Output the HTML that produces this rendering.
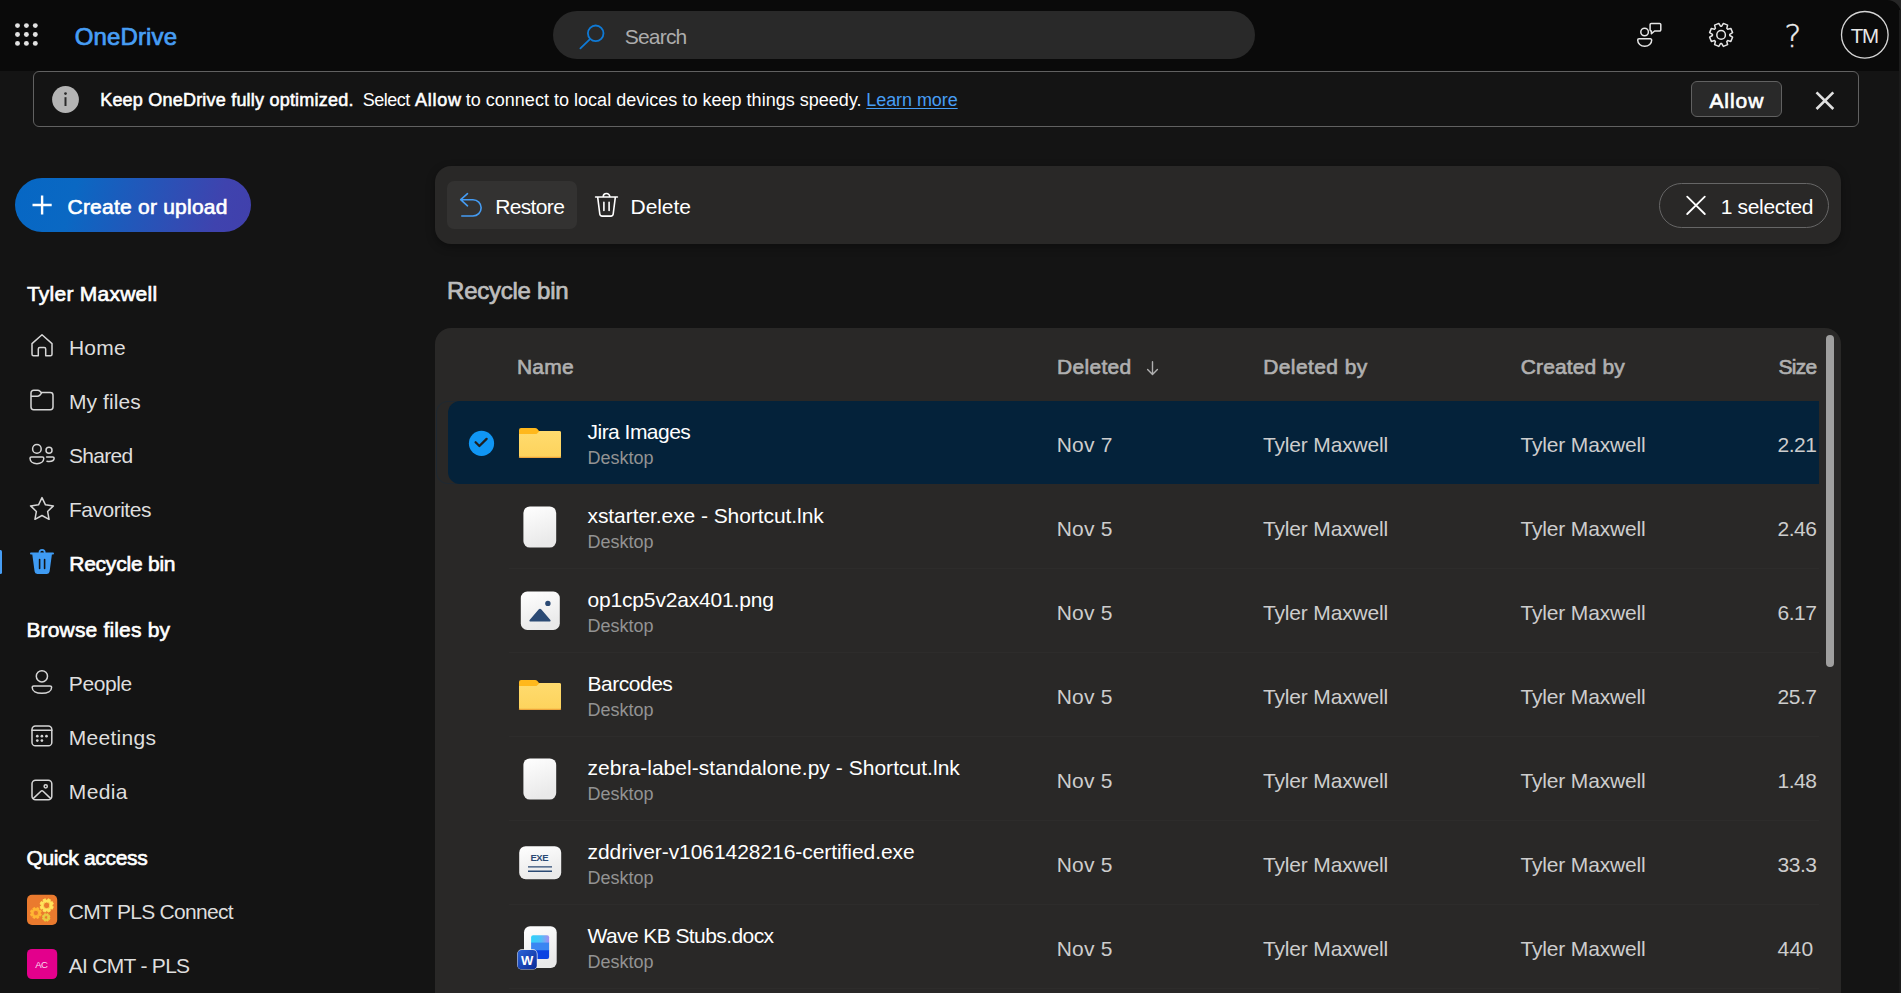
<!DOCTYPE html>
<html lang="en">
<head>
<meta charset="utf-8">
<title>Recycle bin - OneDrive</title>
<style>
*{box-sizing:border-box;margin:0;padding:0}
html,body{width:1901px;height:993px;overflow:hidden;background:#141414}
body{position:relative;font-family:"Liberation Sans",sans-serif;color:#fff;-webkit-font-smoothing:antialiased}
.abs{position:absolute}
.t{position:absolute;white-space:nowrap;line-height:1}
.b{font-weight:bold}
#hdr{left:0;top:0;width:1901px;height:71px;background:#0a0a0a}
#search{left:553px;top:11px;width:702px;height:48px;border-radius:24px;background:#292929}
#banner{left:33px;top:71px;width:1826px;height:56px;border:1px solid #616161;border-radius:6px;background:#141414}
#allow{left:1691px;top:81px;width:91px;height:36px;border:1px solid #616161;border-radius:6px;background:#292929}
#create{left:15px;top:178px;width:236px;height:54px;border-radius:27px;background:linear-gradient(105deg,#0667c4 0%,#0a68c3 25%,#3f43ae 85%,#4140ac 100%)}
#cmd{left:435px;top:166px;width:1406px;height:78px;border-radius:16px;background:#292827;box-shadow:0 3px 8px rgba(0,0,0,.35)}
#restore{left:447px;top:181px;width:130px;height:48px;border-radius:7px;background:#333231}
#pill{left:1659px;top:183px;width:170px;height:45px;border:1px solid #666;border-radius:23px}
#list{left:435px;top:328px;width:1406px;height:700px;border-radius:16px;background:#292827}
#sel{left:448px;top:401px;width:1371px;height:83px;border-radius:12px 0 0 12px;background:#04223a}
.div{position:absolute;left:509px;width:1310px;height:1px;background:#2d2c2b}
#scroll{left:1826px;top:335px;width:8px;height:332px;border-radius:4px;background:#9f9f9f}
.nav{color:#dedede;font-size:21px}
.h{font-weight:bold;font-size:20px;color:#fff}
.n{font-size:21px;color:#fff}
.s{font-size:18px;color:#9a9a9a}
.c{font-size:21px;color:#d0d0d0}
.ch{font-size:20px;font-weight:bold;color:#b3b3b3}
svg{position:absolute;overflow:visible}
</style>
</head>
<body>
<!-- header -->
<div id="hdr" class="abs"></div>
<div id="search" class="abs"></div>
<div id="banner" class="abs"></div>
<div id="allow" class="abs"></div>
<div id="create" class="abs"></div>
<div id="cmd" class="abs"></div>
<div id="restore" class="abs"></div>
<div id="pill" class="abs"></div>
<div id="list" class="abs"></div>
<div class="abs" style="left:436px;top:401px;width:26px;height:83px;border:1px solid rgba(10,45,75,.3);border-right:none;border-radius:12px 0 0 12px"></div>
<div id="sel" class="abs"></div>
<div id="scroll" class="abs"></div>
<div class="div" style="top:568px"></div><div class="div" style="top:652px"></div><div class="div" style="top:736px"></div><div class="div" style="top:820px"></div><div class="div" style="top:904px"></div><div class="div" style="top:988px"></div>
<svg width="1901" height="993" viewBox="0 0 1901 993" style="left:0;top:0" fill="none" stroke-linecap="round" stroke-linejoin="round">
<path d="M1887 0 H1901 V14 A14 14 0 0 0 1887 0 Z" fill="#262626"/>
<rect x="1899" y="10" width="2" height="983" fill="#1b1b1b"/>
<circle cx="17.5" cy="25.6" r="2.45" fill="#e2e2e2"/>
<circle cx="17.5" cy="34.5" r="2.45" fill="#e2e2e2"/>
<circle cx="17.5" cy="43.4" r="2.45" fill="#e2e2e2"/>
<circle cx="26.4" cy="25.6" r="2.45" fill="#e2e2e2"/>
<circle cx="26.4" cy="34.5" r="2.45" fill="#e2e2e2"/>
<circle cx="26.4" cy="43.4" r="2.45" fill="#e2e2e2"/>
<circle cx="35.3" cy="25.6" r="2.45" fill="#e2e2e2"/>
<circle cx="35.3" cy="34.5" r="2.45" fill="#e2e2e2"/>
<circle cx="35.3" cy="43.4" r="2.45" fill="#e2e2e2"/>
<g stroke="#0f7ad6" stroke-width="1.8"><circle cx="595.7" cy="33.3" r="7.8"/><path d="M590 39.2 L580.4 48.3"/></g>
<g stroke="#e6e6e6" stroke-width="1.5"><circle cx="1644.6" cy="32" r="3.8"/><path d="M1639 38.8 H1650.4 a1.3 1.3 0 0 1 1.3 1.3 c0 3.6 -3 6.2 -7 6.2 s-7 -2.6 -7 -6.2 a1.3 1.3 0 0 1 1.3 -1.3 Z"/><path d="M1651.3 23.4 H1659.6 a1.2 1.2 0 0 1 1.2 1.2 V29.8 a1.2 1.2 0 0 1 -1.2 1.2 H1654.6 L1651.4 33.8 V31 a1.2 1.2 0 0 1 -1.3 -1.2 V24.6 a1.2 1.2 0 0 1 1.2 -1.2 Z"/></g>
<g stroke="#e6e6e6" stroke-width="1.5"><path d="M1721.71 26.22 L1723.38 23.42 L1727.60 25.17 L1726.80 28.33 L1727.67 29.20 L1730.83 28.40 L1732.58 32.62 L1729.78 34.29 L1729.78 35.51 L1732.58 37.18 L1730.83 41.40 L1727.67 40.60 L1726.80 41.47 L1727.60 44.63 L1723.38 46.38 L1721.71 43.58 L1720.49 43.58 L1718.82 46.38 L1714.60 44.63 L1715.40 41.47 L1714.53 40.60 L1711.37 41.40 L1709.62 37.18 L1712.42 35.51 L1712.42 34.29 L1709.62 32.62 L1711.37 28.40 L1714.53 29.20 L1715.40 28.33 L1714.60 25.17 L1718.82 23.42 L1720.49 26.22 Z"/><circle cx="1721.1" cy="34.9" r="4.3"/></g>
<circle cx="1864.8" cy="34.8" r="23.3" stroke="#d6d6d6" stroke-width="1.3"/>
<circle cx="65.5" cy="99.5" r="13.4" fill="#b4b4b4"/><rect x="64.5" y="97.2" width="2" height="8.8" fill="#2a2a2a"/><circle cx="65.5" cy="93.6" r="1.35" fill="#2a2a2a"/>
<path d="M1816.5 92.3 L1833.3 109 M1833.3 92.3 L1816.5 109" stroke="#e0e0e0" stroke-width="2.6" stroke-linecap="butt"/>
<path d="M32.5 205 H51.7 M42.1 195.4 V214.6" stroke="#fff" stroke-width="2.4" stroke-linecap="butt"/>
<path d="M467.5 193.7 L460.7 199.7 L467.5 205.8 M461.2 199.7 H473 a8.15 8.15 0 0 1 0 16.3 H461.8" stroke="#459cf3" stroke-width="1.6"/>
<g stroke="#fff" stroke-width="1.6"><path d="M595.6 197 H617.4 M603.2 196.8 a3.3 3.3 0 0 1 6.6 0 M597.7 197.3 L599.8 214 a2.4 2.4 0 0 0 2.4 2.1 H610.8 a2.4 2.4 0 0 0 2.4 -2.1 L615.3 197.3 M603.9 202.3 V210.4 M609.1 202.3 V210.4"/></g>
<path d="M1687.2 196.6 L1704.8 214 M1704.8 196.6 L1687.2 214" stroke="#fff" stroke-width="1.8"/>
<path d="M1152.5 361.8 V374 M1147.6 369.5 L1152.5 374.4 L1157.4 369.5" stroke="#b0b0b0" stroke-width="1.4"/>
<path d="M0 550 H0.5 a1.5 1.5 0 0 1 1.5 1.5 V572.5 a1.5 1.5 0 0 1 -1.5 1.5 H0 Z" fill="#479ef5"/>
<g stroke="#d6d6d6" stroke-width="1.5">
<path d="M42 334.8 L52 343.6 V354.2 a1.5 1.5 0 0 1 -1.5 1.5 H45.7 V349 a1.5 1.5 0 0 0 -1.5 -1.5 H39.8 a1.5 1.5 0 0 0 -1.5 1.5 V355.7 H33.5 a1.5 1.5 0 0 1 -1.5 -1.5 V343.6 Z"/>
<path d="M31 393 a2.7 2.7 0 0 1 2.7 -2.7 H37.6 c1 0 1.7 .3 2.4 1 l1.3 1.3 H50.3 a2.7 2.7 0 0 1 2.7 2.7 V407 a2.7 2.7 0 0 1 -2.7 2.7 H33.7 a2.7 2.7 0 0 1 -2.7 -2.7 Z M31 396.3 H37.4 c.9 0 1.6 -.3 2.2 -.9 L41.6 393"/>
<circle cx="36.9" cy="448.9" r="4.3"/><path d="M31.4 456.9 H42.4 a1.4 1.4 0 0 1 1.4 1.4 c0 3.2 -3 5.4 -6.9 5.4 s-6.9 -2.2 -6.9 -5.4 a1.4 1.4 0 0 1 1.4 -1.4 Z"/>
<circle cx="49" cy="450.3" r="3"/><path d="M46.6 457 H52.8 a1.3 1.3 0 0 1 1.3 1.3 c0 2 -2 3.2 -5 3.2 c-.8 0 -1.5 -.1 -2.1 -.2"/>
<path d="M42.00 497.60 L45.47 504.83 L53.41 505.89 L47.61 511.42 L49.05 519.31 L42.00 515.50 L34.95 519.31 L36.39 511.42 L30.59 505.89 L38.53 504.83 Z"/>
<circle cx="41.9" cy="676.3" r="5.6"/><path d="M33.8 685.9 H50 a1.6 1.6 0 0 1 1.6 1.6 c0 3.6 -4 5.8 -9.7 5.8 s-9.7 -2.2 -9.7 -5.8 a1.6 1.6 0 0 1 1.6 -1.6 Z"/>
<rect x="32" y="726" width="19.8" height="19.8" rx="3.4"/><path d="M32 730.2 H51.8"/>
<rect x="32" y="780.2" width="19.8" height="19.6" rx="3.6"/><circle cx="45.7" cy="786.3" r="1.6"/><path d="M33.4 798.4 L40.9 791.2 a1.6 1.6 0 0 1 2.2 0 L50.5 798.4"/>
</g>
<circle cx="37.3" cy="736.2" r="1.35" fill="#d6d6d6"/>
<circle cx="41.9" cy="736.2" r="1.35" fill="#d6d6d6"/>
<circle cx="46.5" cy="736.2" r="1.35" fill="#d6d6d6"/>
<circle cx="37.3" cy="740.6" r="1.35" fill="#d6d6d6"/>
<circle cx="41.9" cy="740.6" r="1.35" fill="#d6d6d6"/>
<path d="M38.6 552.6 a3.5 3.5 0 0 1 7 0 H53 a1 1 0 0 1 0 2 H51.9 L49.6 571.6 a2.7 2.7 0 0 1 -2.7 2.4 H37.3 a2.7 2.7 0 0 1 -2.7 -2.4 L32.3 554.6 H31 a1 1 0 0 1 0 -2 Z M40.3 552.6 H43.9 a1.8 1.8 0 0 0 -3.6 0 Z" fill="#3f9bf3" fill-rule="evenodd"/>
<path d="M39.6 559.6 V568.4 M44.6 559.6 V568.4" stroke="#141414" stroke-width="1.6"/>
<rect x="27" y="894.8" width="30.2" height="30.2" rx="5" fill="#ea7a2e"/>
<path d="M47.33 900.04 L48.03 898.73 L50.48 899.75 L50.04 901.16 L50.94 902.06 L52.35 901.62 L53.37 904.07 L52.06 904.77 L52.06 906.03 L53.37 906.73 L52.35 909.18 L50.94 908.74 L50.04 909.64 L50.48 911.05 L48.03 912.07 L47.33 910.76 L46.07 910.76 L45.37 912.07 L42.92 911.05 L43.36 909.64 L42.46 908.74 L41.05 909.18 L40.03 906.73 L41.34 906.03 L41.34 904.77 L40.03 904.07 L41.05 901.62 L42.46 902.06 L43.36 901.16 L42.92 899.75 L45.37 898.73 L46.07 900.04 Z M50.0 905.4 a3.3 3.3 0 1 0 -6.6 0 a3.3 3.3 0 1 0 6.6 0 Z" fill="#ffe45c" fill-rule="evenodd" stroke="#ffe45c" stroke-width="0.8"/>
<path d="M36.43 908.53 L36.99 907.51 L39.01 908.34 L38.69 909.47 L39.43 910.21 L40.56 909.89 L41.39 911.91 L40.37 912.47 L40.37 913.53 L41.39 914.09 L40.56 916.11 L39.43 915.79 L38.69 916.53 L39.01 917.66 L36.99 918.49 L36.43 917.47 L35.37 917.47 L34.81 918.49 L32.79 917.66 L33.11 916.53 L32.37 915.79 L31.24 916.11 L30.41 914.09 L31.43 913.53 L31.43 912.47 L30.41 911.91 L31.24 909.89 L32.37 910.21 L33.11 909.47 L32.79 908.34 L34.81 907.51 L35.37 908.53 Z M38.6 913 a2.7 2.7 0 1 0 -5.4 0 a2.7 2.7 0 1 0 5.4 0 Z" fill="#ffb733" fill-rule="evenodd" stroke="#ffb733" stroke-width="0.8"/>
<path d="M46.56 914.32 L46.96 913.57 L48.37 914.16 L48.12 914.97 L48.63 915.48 L49.44 915.23 L50.03 916.64 L49.28 917.04 L49.28 917.76 L50.03 918.16 L49.44 919.57 L48.63 919.32 L48.12 919.83 L48.37 920.64 L46.96 921.23 L46.56 920.48 L45.84 920.48 L45.44 921.23 L44.03 920.64 L44.28 919.83 L43.77 919.32 L42.96 919.57 L42.37 918.16 L43.12 917.76 L43.12 917.04 L42.37 916.64 L42.96 915.23 L43.77 915.48 L44.28 914.97 L44.03 914.16 L45.44 913.57 L45.84 914.32 Z M48.0 917.4 a1.8 1.8 0 1 0 -3.6 0 a1.8 1.8 0 1 0 3.6 0 Z" fill="#e9cf42" fill-rule="evenodd" stroke="#e9cf42" stroke-width="0.8"/>
<rect x="27" y="948.9" width="30.2" height="30.2" rx="5" fill="#e3008c"/>
<circle cx="481.5" cy="443.4" r="12.6" fill="#1096f4"/><path d="M475.6 442.3 L479.4 446 L486.6 438.9" stroke="#1f1f1f" stroke-width="2.3"/>
<defs><linearGradient id="fg" x1="0" y1="0" x2="0" y2="1"><stop offset="0" stop-color="#ffdb6e"/><stop offset="1" stop-color="#fdd35c"/></linearGradient><linearGradient id="pg" x1="0" y1="0" x2="0.3" y2="1"><stop offset="0" stop-color="#ffffff"/><stop offset="1" stop-color="#e9e9e9"/></linearGradient><linearGradient id="wg" x1="0" y1="0" x2="1" y2="1"><stop offset="0" stop-color="#2a63d8"/><stop offset="1" stop-color="#0a2a96"/></linearGradient><linearGradient id="d1" x1="0" y1="0" x2="1" y2="0"><stop offset="0" stop-color="#2fd2fa"/><stop offset="0.55" stop-color="#4fc0f8"/><stop offset="1" stop-color="#a58df0"/></linearGradient></defs>
<path d="M519 429.9 a2 2 0 0 1 2 -2 H535 c1 0 1.8 .4 2.4 1.1 L539 431.0 H559 a2 2 0 0 1 2 2 V437.9 H519 Z" fill="#ffb81c"/><path d="M519 434.09999999999997 H535.2 c.9 0 1.6 -.3 2.2 -.9 L539.6 431.0 H559.4 a1.6 1.6 0 0 1 1.6 1.6 V456.29999999999995 a1.6 1.6 0 0 1 -1.6 1.6 H520.6 a1.6 1.6 0 0 1 -1.6 -1.6 Z" fill="url(#fg)"/><path d="M519.3 457.29999999999995 H560.7" stroke="#ea9a34" stroke-width="1"/>
<path d="M519 681.9 a2 2 0 0 1 2 -2 H535 c1 0 1.8 .4 2.4 1.1 L539 683.0 H559 a2 2 0 0 1 2 2 V689.9 H519 Z" fill="#ffb81c"/><path d="M519 686.1 H535.2 c.9 0 1.6 -.3 2.2 -.9 L539.6 683.0 H559.4 a1.6 1.6 0 0 1 1.6 1.6 V708.3 a1.6 1.6 0 0 1 -1.6 1.6 H520.6 a1.6 1.6 0 0 1 -1.6 -1.6 Z" fill="url(#fg)"/><path d="M519.3 709.3 H560.7" stroke="#ea9a34" stroke-width="1"/>
<rect x="523.4" y="506.4" width="32.8" height="41.2" rx="6.5" fill="url(#pg)"/>
<rect x="523.4" y="758.4" width="32.8" height="41.2" rx="6.5" fill="url(#pg)"/>
<rect x="520.8" y="591.6" width="39" height="38.4" rx="6.5" fill="url(#pg)"/>
<path d="M529.6 620 L538.6 609.6 a1.8 1.8 0 0 1 2.8 0 L550.4 620 a1 1 0 0 1 -.8 1.6 H530.4 a1 1 0 0 1 -.8 -1.6 Z" fill="#2b4a74"/><circle cx="547.9" cy="603.4" r="2.7" fill="#2b4a74"/>
<rect x="519.2" y="846.2" width="42" height="33" rx="6.5" fill="url(#pg)"/>
<path d="M528 866.9 H552 M528 871.2 H552" stroke="#2b4a74" stroke-width="1.4" stroke-linecap="butt"/>
<rect x="524" y="926.3" width="32.7" height="41.6" rx="6" fill="url(#pg)"/>
<rect x="531.1" y="935.2" width="18" height="9" rx="2" fill="url(#d1)"/><rect x="531.1" y="942.6" width="18" height="8.4" fill="#3b86f2"/><path d="M531.1 950.2 H549.1 V957 a2 2 0 0 1 -2 2 H533.1 a2 2 0 0 1 -2 -2 Z" fill="#0a43e2"/>
<rect x="517.2" y="949.3" width="20.3" height="20.3" rx="4.6" fill="#f2f2f2"/><rect x="517.6" y="950" width="19.2" height="19.2" rx="4" fill="url(#wg)"/>
</svg>
<span class="t" style="left:74.7px;top:24.9px;font-size:24px;color:#479ef5;letter-spacing:0.14px;-webkit-text-stroke:0.74px #479ef5;">OneDrive</span>
<span class="t" style="left:624.8px;top:25.6px;font-size:21px;color:#adadad;letter-spacing:-0.81px;">Search</span>
<span class="t" style="left:1850.8px;top:25.6px;font-size:20.5px;color:#e8e8e8;letter-spacing:-1.27px;">TM</span>
<span class="t" style="left:100.2px;top:91.3px;font-size:18px;color:#ffffff;letter-spacing:0.21px;-webkit-text-stroke:0.56px #ffffff;">Keep OneDrive fully optimized.</span>
<span class="t" style="left:362.7px;top:91.3px;font-size:18px;color:#ffffff;letter-spacing:-0.48px;">Select</span>
<span class="t" style="left:415.1px;top:91.3px;font-size:18px;color:#ffffff;letter-spacing:0.72px;-webkit-text-stroke:0.56px #ffffff;">Allow</span>
<span class="t" style="left:465.7px;top:91.3px;font-size:18px;color:#ffffff;letter-spacing:0.02px;">to connect to local devices to keep things speedy.</span>
<span class="t" style="left:866.3px;top:91.3px;font-size:18px;color:#479ef5;letter-spacing:-0.07px;text-decoration:underline;text-underline-offset:2px">Learn more</span>
<span class="t" style="left:1709.4px;top:90.2px;font-size:21px;color:#ffffff;letter-spacing:0.94px;-webkit-text-stroke:0.65px #ffffff;">Allow</span>
<span class="t" style="left:67.5px;top:196.2px;font-size:21px;color:#ffffff;letter-spacing:0.23px;-webkit-text-stroke:0.65px #ffffff;">Create or upload</span>
<span class="t" style="left:495.2px;top:196.2px;font-size:21px;color:#ffffff;letter-spacing:-0.64px;">Restore</span>
<span class="t" style="left:630.6px;top:196.2px;font-size:21px;color:#ffffff;letter-spacing:-0.08px;">Delete</span>
<span class="t" style="left:1720.7px;top:195.9px;font-size:21px;color:#ffffff;letter-spacing:-0.33px;">1 selected</span>
<span class="t" style="left:447.1px;top:278.7px;font-size:24px;color:#bdbdbd;letter-spacing:-0.26px;-webkit-text-stroke:0.74px #bdbdbd;">Recycle bin</span>
<span class="t" style="left:26.9px;top:283.2px;font-size:21px;color:#ffffff;letter-spacing:0.25px;-webkit-text-stroke:0.65px #ffffff;">Tyler Maxwell</span>
<span class="t" style="left:68.9px;top:337.2px;font-size:21px;color:#dedede;letter-spacing:0.25px;">Home</span>
<span class="t" style="left:68.9px;top:391.2px;font-size:21px;color:#dedede;letter-spacing:0.11px;">My files</span>
<span class="t" style="left:68.9px;top:445.2px;font-size:21px;color:#dedede;letter-spacing:-0.69px;">Shared</span>
<span class="t" style="left:68.9px;top:499.2px;font-size:21px;color:#dedede;letter-spacing:-0.48px;">Favorites</span>
<span class="t" style="left:69.2px;top:553.2px;font-size:21px;color:#ffffff;letter-spacing:-0.22px;-webkit-text-stroke:0.65px #ffffff;">Recycle bin</span>
<span class="t" style="left:26.4px;top:618.6px;font-size:21px;color:#ffffff;letter-spacing:0.17px;-webkit-text-stroke:0.65px #ffffff;">Browse files by</span>
<span class="t" style="left:68.8px;top:673.2px;font-size:21px;color:#dedede;letter-spacing:-0.38px;">People</span>
<span class="t" style="left:68.8px;top:727.0px;font-size:21px;color:#dedede;letter-spacing:0.27px;">Meetings</span>
<span class="t" style="left:68.8px;top:780.9px;font-size:21px;color:#dedede;letter-spacing:0.37px;">Media</span>
<span class="t" style="left:26.4px;top:846.5px;font-size:21px;color:#ffffff;letter-spacing:-0.32px;-webkit-text-stroke:0.65px #ffffff;">Quick access</span>
<span class="t" style="left:68.8px;top:900.8px;font-size:21px;color:#dedede;letter-spacing:-0.71px;">CMT PLS Connect</span>
<span class="t" style="left:68.8px;top:955.0px;font-size:21px;color:#dedede;letter-spacing:-0.71px;">AI CMT - PLS</span>
<span class="t" style="left:35.2px;top:960.3px;font-size:9.6px;color:#fbdcef;letter-spacing:-0.56px;">AC</span>
<span class="t" style="left:1784.3px;top:19.7px;font-size:32.5px;color:#ececec;letter-spacing:-0.25px;font-family:DejaVu Sans Light,DejaVu Sans,sans-serif;font-weight:200;-webkit-text-stroke:0.35px #ececec;">?</span>
<span class="t" style="left:530.4px;top:853.1px;font-size:9.5px;color:#2b4a74;letter-spacing:-0.43px;font-weight:bold;">EXE</span>
<span class="t" style="left:521.0px;top:953.6px;font-size:13px;color:#ffffff;letter-spacing:0.56px;font-weight:bold;">W</span>
<span class="t" style="left:516.9px;top:356.0px;font-size:21px;color:#b0b0b0;letter-spacing:0.27px;-webkit-text-stroke:0.65px #b0b0b0;">Name</span>
<span class="t" style="left:1057.0px;top:356.0px;font-size:21px;color:#b0b0b0;letter-spacing:0.32px;-webkit-text-stroke:0.65px #b0b0b0;">Deleted</span>
<span class="t" style="left:1263.2px;top:356.0px;font-size:21px;color:#b0b0b0;letter-spacing:0.41px;-webkit-text-stroke:0.65px #b0b0b0;">Deleted by</span>
<span class="t" style="left:1520.7px;top:356.0px;font-size:21px;color:#b0b0b0;letter-spacing:0.15px;-webkit-text-stroke:0.65px #b0b0b0;">Created by</span>
<span class="t" style="left:1778.6px;top:356.0px;font-size:21px;color:#b0b0b0;letter-spacing:-0.74px;-webkit-text-stroke:0.65px #b0b0b0;">Size</span>
<span class="t" style="left:587.5px;top:420.8px;font-size:21px;color:#ffffff;letter-spacing:-0.52px;">Jira Images</span>
<span class="t" style="left:587.6px;top:448.7px;font-size:18px;color:#939393;letter-spacing:-0.00px;">Desktop</span>
<span class="t" style="left:1056.7px;top:434.2px;font-size:21px;color:#cdcdcd;letter-spacing:0.23px;">Nov 7</span>
<span class="t" style="left:1262.9px;top:434.2px;font-size:21px;color:#cdcdcd;letter-spacing:-0.15px;">Tyler Maxwell</span>
<span class="t" style="left:1520.4px;top:434.2px;font-size:21px;color:#cdcdcd;letter-spacing:-0.15px;">Tyler Maxwell</span>
<span class="t" style="left:1777.6px;top:434.2px;font-size:21px;color:#cdcdcd;letter-spacing:-0.53px;">2.21</span>
<span class="t" style="left:587.5px;top:504.8px;font-size:21px;color:#ffffff;letter-spacing:-0.07px;">xstarter.exe - Shortcut.lnk</span>
<span class="t" style="left:587.6px;top:532.7px;font-size:18px;color:#939393;letter-spacing:-0.00px;">Desktop</span>
<span class="t" style="left:1056.7px;top:518.2px;font-size:21px;color:#cdcdcd;letter-spacing:0.23px;">Nov 5</span>
<span class="t" style="left:1262.9px;top:518.2px;font-size:21px;color:#cdcdcd;letter-spacing:-0.15px;">Tyler Maxwell</span>
<span class="t" style="left:1520.4px;top:518.2px;font-size:21px;color:#cdcdcd;letter-spacing:-0.15px;">Tyler Maxwell</span>
<span class="t" style="left:1777.6px;top:518.2px;font-size:21px;color:#cdcdcd;letter-spacing:-0.53px;">2.46</span>
<span class="t" style="left:587.5px;top:588.8px;font-size:21px;color:#ffffff;letter-spacing:-0.17px;">op1cp5v2ax401.png</span>
<span class="t" style="left:587.6px;top:616.7px;font-size:18px;color:#939393;letter-spacing:-0.00px;">Desktop</span>
<span class="t" style="left:1056.7px;top:602.2px;font-size:21px;color:#cdcdcd;letter-spacing:0.23px;">Nov 5</span>
<span class="t" style="left:1262.9px;top:602.2px;font-size:21px;color:#cdcdcd;letter-spacing:-0.15px;">Tyler Maxwell</span>
<span class="t" style="left:1520.4px;top:602.2px;font-size:21px;color:#cdcdcd;letter-spacing:-0.15px;">Tyler Maxwell</span>
<span class="t" style="left:1777.6px;top:602.2px;font-size:21px;color:#cdcdcd;letter-spacing:-0.53px;">6.17</span>
<span class="t" style="left:587.5px;top:672.8px;font-size:21px;color:#ffffff;letter-spacing:-0.48px;">Barcodes</span>
<span class="t" style="left:587.6px;top:700.7px;font-size:18px;color:#939393;letter-spacing:-0.00px;">Desktop</span>
<span class="t" style="left:1056.7px;top:686.2px;font-size:21px;color:#cdcdcd;letter-spacing:0.23px;">Nov 5</span>
<span class="t" style="left:1262.9px;top:686.2px;font-size:21px;color:#cdcdcd;letter-spacing:-0.15px;">Tyler Maxwell</span>
<span class="t" style="left:1520.4px;top:686.2px;font-size:21px;color:#cdcdcd;letter-spacing:-0.15px;">Tyler Maxwell</span>
<span class="t" style="left:1777.6px;top:686.2px;font-size:21px;color:#cdcdcd;letter-spacing:-0.53px;">25.7</span>
<span class="t" style="left:587.5px;top:756.8px;font-size:21px;color:#ffffff;letter-spacing:0.03px;">zebra-label-standalone.py - Shortcut.lnk</span>
<span class="t" style="left:587.6px;top:784.7px;font-size:18px;color:#939393;letter-spacing:-0.00px;">Desktop</span>
<span class="t" style="left:1056.7px;top:770.2px;font-size:21px;color:#cdcdcd;letter-spacing:0.23px;">Nov 5</span>
<span class="t" style="left:1262.9px;top:770.2px;font-size:21px;color:#cdcdcd;letter-spacing:-0.15px;">Tyler Maxwell</span>
<span class="t" style="left:1520.4px;top:770.2px;font-size:21px;color:#cdcdcd;letter-spacing:-0.15px;">Tyler Maxwell</span>
<span class="t" style="left:1777.6px;top:770.2px;font-size:21px;color:#cdcdcd;letter-spacing:-0.53px;">1.48</span>
<span class="t" style="left:587.5px;top:840.8px;font-size:21px;color:#ffffff;letter-spacing:-0.06px;">zddriver-v1061428216-certified.exe</span>
<span class="t" style="left:587.6px;top:868.7px;font-size:18px;color:#939393;letter-spacing:-0.00px;">Desktop</span>
<span class="t" style="left:1056.7px;top:854.2px;font-size:21px;color:#cdcdcd;letter-spacing:0.23px;">Nov 5</span>
<span class="t" style="left:1262.9px;top:854.2px;font-size:21px;color:#cdcdcd;letter-spacing:-0.15px;">Tyler Maxwell</span>
<span class="t" style="left:1520.4px;top:854.2px;font-size:21px;color:#cdcdcd;letter-spacing:-0.15px;">Tyler Maxwell</span>
<span class="t" style="left:1777.6px;top:854.2px;font-size:21px;color:#cdcdcd;letter-spacing:-0.53px;">33.3</span>
<span class="t" style="left:587.5px;top:924.8px;font-size:21px;color:#ffffff;letter-spacing:-0.58px;">Wave KB Stubs.docx</span>
<span class="t" style="left:587.6px;top:952.7px;font-size:18px;color:#939393;letter-spacing:-0.00px;">Desktop</span>
<span class="t" style="left:1056.7px;top:938.2px;font-size:21px;color:#cdcdcd;letter-spacing:0.23px;">Nov 5</span>
<span class="t" style="left:1262.9px;top:938.2px;font-size:21px;color:#cdcdcd;letter-spacing:-0.15px;">Tyler Maxwell</span>
<span class="t" style="left:1520.4px;top:938.2px;font-size:21px;color:#cdcdcd;letter-spacing:-0.15px;">Tyler Maxwell</span>
<span class="t" style="left:1777.6px;top:938.2px;font-size:21px;color:#cdcdcd;letter-spacing:0.22px;">440</span>
</body>
</html>
